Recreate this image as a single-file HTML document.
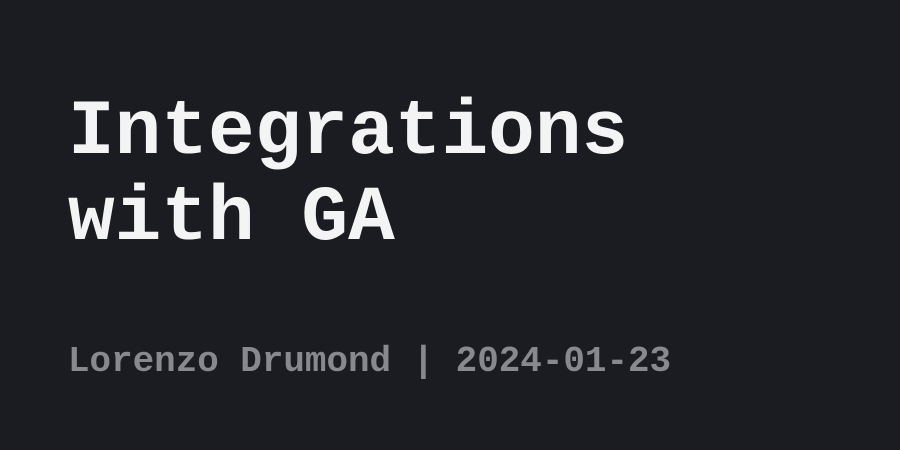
<!DOCTYPE html>
<html><head><style>
html,body{margin:0;padding:0;}
body{width:900px;height:450px;background:#1b1c22;position:relative;overflow:hidden;font-family:"Liberation Mono",monospace;font-weight:bold;}
.t{position:absolute;left:68px;top:90px;font-size:77.8px;line-height:86px;color:#f4f4f5;}
.s{position:absolute;left:68px;top:340px;font-size:35.9px;line-height:44px;color:#88898e;white-space:pre;}
</style></head><body>
<div class="t">Integrations<br>with GA</div>
<div class="s">Lorenzo Drumond | 2024-01-23</div>
</body></html>
